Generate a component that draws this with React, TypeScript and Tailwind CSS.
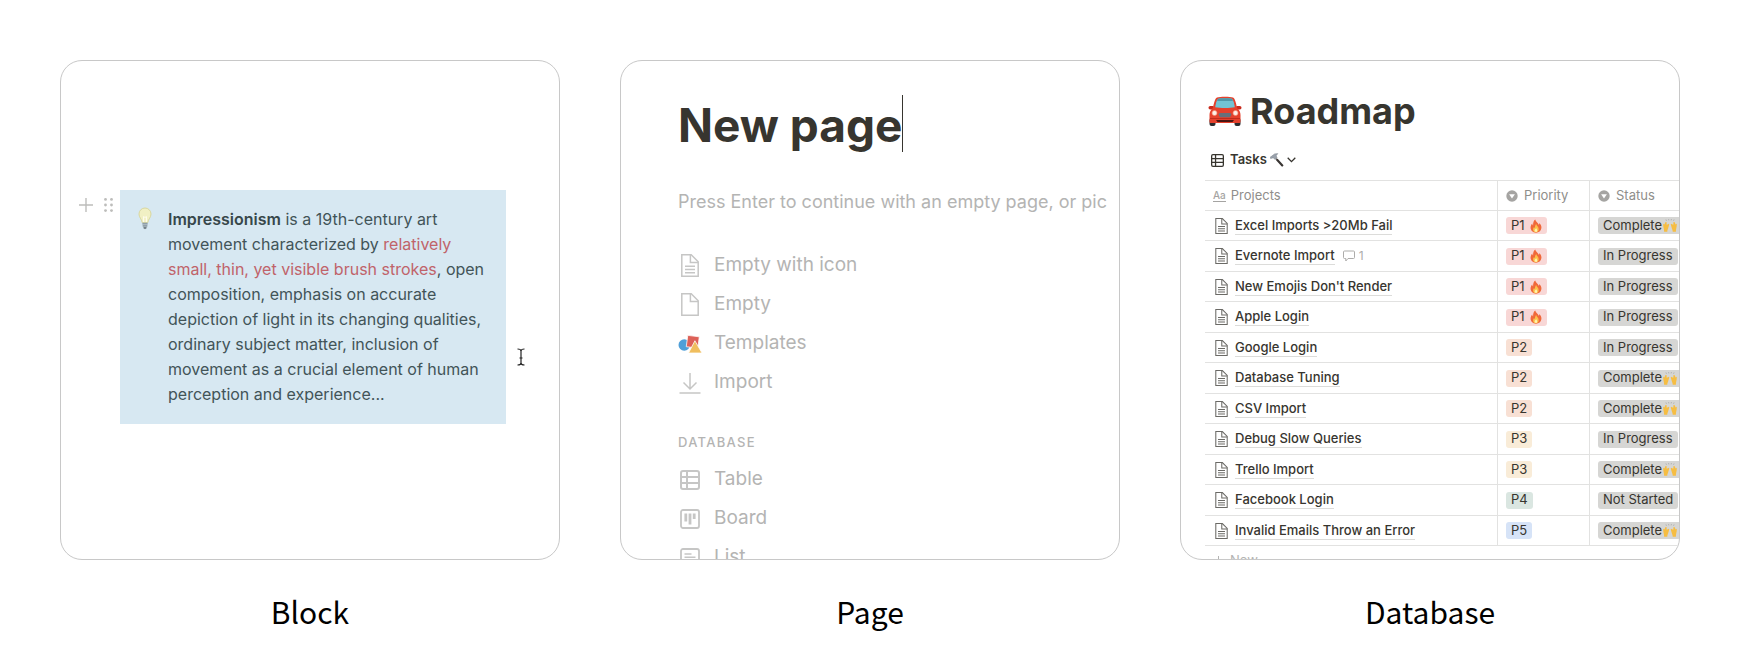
import type { ReactNode } from "react";

type Priority = "P1" | "P2" | "P3" | "P4" | "P5";
type Status = "Complete" | "In Progress" | "Not Started";

interface Task {
  name: string;
  priority: Priority;
  status: Status;
  comments?: number;
}

const tasks: Task[] = [
  { name: "Excel Imports >20Mb Fail", priority: "P1", status: "Complete" },
  { name: "Evernote Import", priority: "P1", status: "In Progress", comments: 1 },
  { name: "New Emojis Don't Render", priority: "P1", status: "In Progress" },
  { name: "Apple Login", priority: "P1", status: "In Progress" },
  { name: "Google Login", priority: "P2", status: "In Progress" },
  { name: "Database Tuning", priority: "P2", status: "Complete" },
  { name: "CSV Import", priority: "P2", status: "Complete" },
  { name: "Debug Slow Queries", priority: "P3", status: "In Progress" },
  { name: "Trello Import", priority: "P3", status: "Complete" },
  { name: "Facebook Login", priority: "P4", status: "Not Started" },
  { name: "Invalid Emails Throw an Error", priority: "P5", status: "Complete" }
];

const priorityColors: Record<Priority, string> = {
  P1: "bg-[#f8d7d6]",
  P2: "bg-[#f8e0d4]",
  P3: "bg-[#f9ecd8]",
  P4: "bg-[#dae6e1]",
  P5: "bg-[#d6e3f7]"
};

function DocIcon({ className, lines = true }: { className: string; lines?: boolean }) {
  return (
    <svg viewBox="0 0 18 23" fill="none" stroke="currentColor" strokeWidth="1.5" className={className} aria-hidden="true">
      <path d="M.8.8h9.4l7 7v14.4H.8z" />
      <path d="M9.4.8v7.8h7.8" />
      {lines && <path d="M4 12.3h10M4 15.5h10M4 18.7h10" />}
    </svg>
  );
}

function TableIcon({ className }: { className: string }) {
  return (
    <svg viewBox="0 0 20 20" fill="none" stroke="currentColor" strokeWidth="2" className={className} aria-hidden="true">
      <rect x="1" y="1" width="18" height="18" rx="2" />
      <path d="M7 1v18M1 7h18M1 13h18" />
    </svg>
  );
}

function BoardIcon() {
  return (
    <svg viewBox="0 0 20 20" fill="none" stroke="currentColor" className="size-5" aria-hidden="true">
      <rect x="1" y="1" width="18" height="18" rx="2" strokeWidth="1.8" />
      <path d="M5.8 4.5v8M10 4.5v11M14.2 4.5v5.5" strokeWidth="2.8" />
    </svg>
  );
}

function ListIcon() {
  return (
    <svg viewBox="0 0 20 20" fill="none" stroke="currentColor" strokeWidth="1.8" className="size-5" aria-hidden="true">
      <rect x="1" y="1" width="18" height="18" rx="2" />
      <path d="M4.5 6h7M4.5 9.3h11M4.5 12.6h9" strokeWidth="1.5" />
    </svg>
  );
}

function TemplatesIcon() {
  return (
    <svg viewBox="0 0 25 20" className="h-5 w-[25px]" aria-hidden="true">
      <circle cx="6.5" cy="11" r="6" fill="#4f9fd8" />
      <path d="M10.2 1l12 1.5-1.6 11.8-12-1.5z" fill="#dd6158" stroke="#fff" strokeWidth=".8" />
      <path d="M17.6 6.6L25 19.4H11z" fill="#f0be5e" stroke="#fff" strokeWidth=".8" />
    </svg>
  );
}

function ImportIcon() {
  return (
    <svg viewBox="0 0 22 22" fill="none" stroke="currentColor" strokeWidth="1.5" className="size-[22px]" aria-hidden="true">
      <path d="M11 1v16M4.5 10.5L11 17l6.5-6.5M.5 21h21" />
    </svg>
  );
}

function BulbIcon() {
  return (
    <svg viewBox="0 0 14 23" className="h-[23px] w-3.5" aria-hidden="true">
      <path d="M7 1a6 6 0 0 0-6 6c0 3.6 2.6 4.8 3.2 8.6h5.6C10.4 11.8 13 10.6 13 7a6 6 0 0 0-6-6z" fill="#f1f0c4" stroke="#d9d79f" />
      <path d="M5.6 15V9.5l1.4 1 1.4-1V15" fill="none" stroke="#fffdf0" />
      <path d="M4.3 15.8h5.4l-.5 4.2H4.8z" fill="#8f9ea8" />
      <path d="M4.5 17.6h5M5 20h4l-1 2H6z" fill="#56646e" stroke="#c9d4da" strokeWidth=".5" />
    </svg>
  );
}

function CarIcon() {
  return (
    <svg viewBox="0 0 34 31" className="h-[31px] w-[34px]" aria-hidden="true">
      <rect x="1.5" y="22" width="6" height="8" rx="2" fill="#2b2b2e" />
      <rect x="26.500" y="22" width="6" height="8" rx="2" fill="#2b2b2e" />
      <rect x="0.500" y="10" width="6" height="3.500" rx="1.700" fill="#c92a1c" />
      <rect x="27.500" y="10" width="6" height="3.500" rx="1.700" fill="#c92a1c" />
      <path d="M9 1.400C12 .5 22 .5 25 1.400c2 .8 3.300 6 4 10.600 2.500 2 3.500 4 3.500 7v6.500c0 1-.7 1.500-1.500 1.500H3c-.8 0-1.500-.5-1.500-1.500V19c0-3 1-5 3.500-7 .7-4.600 2-9.800 4-10.600z" fill="#e5412c" />
      <path d="M10 2.800c3-.6 11-.6 14 0 1.400 1.500 2.400 5.200 2.800 8.400-5 .9-14.600.9-19.600 0 .4-3.200 1.400-6.900 2.800-8.400z" fill="#72c3d3" />
      <path d="M10 2.800c3-.6 11-.6 14 0l1 2.200H9z" fill="#4f98a8" />
      <circle cx="6.500" cy="17" r="2.500" fill="#fdeee6" stroke="#f58b73" strokeWidth=".7" />
      <circle cx="27.500" cy="17" r="2.500" fill="#fdeee6" stroke="#f58b73" strokeWidth=".7" />
      <path d="M11.500 17h11l1 1.600-1.500 2.600H12l-1.500-2.600z" fill="#68707a" />
      <path d="M8 24h18l-1.500 2h-15z" fill="#4a1512" />
      <path d="M2 22.500h30" stroke="#b72718" strokeWidth=".8" />
    </svg>
  );
}

function HammerIcon() {
  return (
    <svg viewBox="0 0 14 14" className="size-3.5" aria-hidden="true">
      <path d="M5.500 5l2 2.200" stroke="#8a7f78" strokeWidth="1.500" />
      <path d="M7.300 7l5 5.400" stroke="#3a3634" strokeWidth="2.200" strokeLinecap="round" />
      <path d="M.6 5.600L.4 3.900l1.400-.8L4.600.900 7.800.600 6.200 2.700l.8 2-1.900 1.900-1.600-1.700-1.200.2z" fill="#9aa2ac" stroke="#7b838d" strokeWidth=".5" />
    </svg>
  );
}

function FireIcon() {
  return (
    <svg viewBox="0 0 12 14" className="h-3.5 w-3" aria-hidden="true">
      <path d="M5.200.5c.5 2.400 3 3.500 3.600 5.300.5-.5.600-1.200.5-1.800C11 5.500 11.600 7.300 11.400 9c-.3 2.800-2.600 4.700-5.400 4.700S.8 11.700.6 9c-.1-1.800.6-3.500 1.700-4.500 0 .9.200 1.500.8 1.900C3 4 3.500 1.700 5.200.5z" fill="#f0683a" />
      <path d="M6.200 5c.2 1.700 2.500 2.600 2.500 5.300 0 2-1.200 3-2.700 3s-2.900-1-2.900-2.900c0-1.200.5-1.900 1-2.500.2.600.4.900.8 1C5 7.500 5.300 6 6.200 5z" fill="#fbc04a" />
      <path d="M6.100 9c.2.900 1.200 1.300 1.200 2.500 0 .9-.6 1.500-1.300 1.500s-1.400-.5-1.400-1.400c0-1.200 1.200-1.500 1.500-2.600z" fill="#fff3b0" />
    </svg>
  );
}

function HandsIcon() {
  return (
    <svg viewBox="0 0 14 13" className="h-[13px] w-3.5 shrink-0" aria-hidden="true">
      <path d="M3 .6l.4 1M5.600.300l.2 1M8.400.300l-.2 1M11 .6l-.4 1" stroke="#9b9b9b" strokeWidth=".8" />
      <path d="M.2 5.200l1-.8.5 1.400.5-2.600 1.300-.1.300 2.900 1.500-1.300 1 .8-1 3.300c-.3 1.400-.9 1.800-1 3.900H1.100C1.200 9.700.1 8.400.2 5.200z" fill="#f6bd42" />
      <path d="M13.800 5.200l-1-.8-.5 1.400-.5-2.600-1.300-.1-.3 2.900-1.500-1.300-1 .8 1 3.300c.3 1.400.9 1.800 1 3.900h3.200c-.1-3 1-4.300.9-7.500z" fill="#f6bd42" />
    </svg>
  );
}

function SelectIcon() {
  return (
    <svg viewBox="0 0 12 12" className="size-3" aria-hidden="true">
      <circle cx="6" cy="6" r="5.7" fill="#a5a4a2" />
      <path d="M3.100 4.200h5.800L6 8.500z" fill="#fff" />
    </svg>
  );
}

function Showcase({ caption, children }: { caption: string; children: ReactNode }) {
  return (
    <figure className="min-w-0">
      <div className="aspect-square overflow-hidden rounded-[22px] border border-[#c8c8c8]">{children}</div>
      <figcaption className="mt-7 text-center font-['Noto_Sans_CJK_SC',sans-serif] text-3xl leading-[46px] text-black">
        {caption}
      </figcaption>
    </figure>
  );
}

function BlockDemo() {
  return (
    <div className="flex items-start pt-[129px]">
      <button type="button" aria-label="Add block" className="mt-2 ml-[18px] text-[#bdbdbb]">
        <svg viewBox="0 0 14 14" stroke="currentColor" strokeWidth="1.4" className="size-3.5" aria-hidden="true">
          <path d="M7 0v14M0 7h14" />
        </svg>
      </button>
      <button type="button" aria-label="Drag block" className="mt-2 mr-[7px] ml-[11px] text-[#bdbdbb]">
        <svg viewBox="0 0 9 14" fill="currentColor" className="h-3.5 w-[9px]" aria-hidden="true">
          <circle cx="1.5" cy="1.4" r="1.4" />
          <circle cx="7.5" cy="1.4" r="1.4" />
          <circle cx="1.5" cy="7" r="1.4" />
          <circle cx="7.5" cy="7" r="1.4" />
          <circle cx="1.5" cy="12.6" r="1.4" />
          <circle cx="7.5" cy="12.6" r="1.4" />
        </svg>
      </button>
      <div className="flex min-w-0 flex-1 items-start gap-4 bg-[#d7e8f2] pt-[17px] pr-5 pb-[17px] pl-[18px]">
        <BulbIcon />
        <p className="min-w-0 flex-1 text-base leading-[25px] text-[#425458]">
          <strong className="font-semibold text-[#37474b]">Impressionism</strong> is a 19th-century art movement
          characterized by <span className="text-[#c0636a]">relatively small, thin, yet visible brush strokes</span>,
          open composition, emphasis on accurate depiction of light in its changing qualities, ordinary subject matter,
          inclusion of movement as a crucial element of human perception and experience...
        </p>
      </div>
      <svg
        viewBox="0 0 8 18"
        fill="none"
        stroke="#222"
        strokeWidth="1.2"
        className="mt-[158px] mr-[34px] ml-[11px] h-[18px] w-2"
        aria-hidden="true"
      >
        <path d="M.5 1C2.500 1 4 1.500 4 3v12c0 1.500-1.500 2-3.500 2M7.500 1C5.500 1 4 1.500 4 3M4 15c0 1.500 1.500 2 3.500 2M2.500 10h3" />
      </svg>
    </div>
  );
}

function MenuItem({ icon, label }: { icon: ReactNode; label: string }) {
  return (
    <li>
      <button type="button" className="flex h-[39px] w-full items-center text-left">
        <span className="mr-3 flex w-6 justify-center text-[#c6c6c5]">{icon}</span>
        {label}
      </button>
    </li>
  );
}

function PageDemo() {
  return (
    <div className="pt-[34px] pl-[57px] text-[19px] text-[#b4b4b3]">
      <div className="flex items-center">
        <h1 className="pt-1 text-[46px] leading-[53px] font-bold text-[#37352f]">New page</h1>
        <span className="h-[57px] w-px bg-[#37352f]" />
      </div>
      <p className="mt-9 text-lg leading-7 whitespace-nowrap">Press Enter to continue with an empty page, or pic</p>
      <ul className="mt-[30px]">
        <MenuItem icon={<DocIcon className="h-[23px] w-[18px]" />} label="Empty with icon" />
        <MenuItem icon={<DocIcon className="h-[23px] w-[18px]" lines={false} />} label="Empty" />
        <MenuItem icon={<TemplatesIcon />} label="Templates" />
        <MenuItem icon={<ImportIcon />} label="Import" />
      </ul>
      <h2 className="mt-[30px] text-[13px] leading-5 font-medium tracking-widest">DATABASE</h2>
      <ul className="mt-2">
        <MenuItem icon={<TableIcon className="size-5" />} label="Table" />
        <MenuItem icon={<BoardIcon />} label="Board" />
        <MenuItem icon={<ListIcon />} label="List" />
      </ul>
    </div>
  );
}

function TaskRow({ task }: { task: Task }) {
  return (
    <tr className="h-[30px] even:h-[31px]">
      <td className="border-b border-[#e2e2e1] pl-2.5">
        <div className="flex items-center">
          <DocIcon className="mr-[7px] h-4 w-[13px] text-[#6a6965]" />
          <a href="#" className="border-b border-[#dcdcda] leading-[17px] font-medium">
            {task.name}
          </a>
          {task.comments && (
            <span className="ml-2 flex items-center gap-1 text-xs text-[#adacaa]">
              <svg viewBox="0 0 12 12" fill="none" stroke="currentColor" className="size-3" aria-hidden="true">
                <path d="M1.500 1h9q1 0 1 1v5.500q0 1-1 1H5L2.800 11V8.500H1.500q-1 0-1-1V2q0-1 1-1z" />
              </svg>
              {task.comments}
            </span>
          )}
        </div>
      </td>
      <td className="border-b border-l border-[#e2e2e1] pl-2">
        <span className={`flex h-[17px] w-fit items-center gap-[5px] rounded-[3px] px-[5px] ${priorityColors[task.priority]}`}>
          {task.priority}
          {task.priority === "P1" && <FireIcon />}
        </span>
      </td>
      <td className="border-b border-l border-[#e2e2e1] pl-2">
        <span className="flex h-[17px] w-fit items-center gap-px rounded-[3px] bg-[#d6d6d4] px-[5px]">
          {task.status}
          {task.status === "Complete" && <HandsIcon />}
        </span>
      </td>
    </tr>
  );
}

function DatabaseDemo() {
  return (
    <div className="pt-[29px] pl-6 text-[13px] whitespace-nowrap text-[#37352f]">
      <h1 className="flex items-center gap-2 pl-[3px] text-4xl leading-[42px] font-bold">
        <CarIcon />
        Roadmap
      </h1>
      <button type="button" className="mt-[18px] flex h-5 items-center pl-1.5 font-semibold">
        <TableIcon className="mr-1.5 size-[13px]" />
        Tasks
        <span className="mx-[3px]">
          <HammerIcon />
        </span>
        <svg viewBox="0 0 9 6" fill="none" stroke="currentColor" strokeWidth="1.3" className="h-1.5 w-[9px]" aria-hidden="true">
          <path d="M.7.8l3.800 3.800L8.300.8" />
        </svg>
      </button>
      <table className="mt-2.5 w-[580px] table-fixed border-separate border-spacing-0 border-t border-[#e2e2e1] text-left">
        <colgroup>
          <col className="w-[292px]" />
          <col className="w-[92px]" />
          <col />
        </colgroup>
        <thead className="text-[#8f8e8b]">
          <tr className="h-[30px]">
            <th className="border-b border-[#e2e2e1] pl-2 font-normal">
              <span className="flex items-center gap-[5px]">
                <span className="border-b border-[#a5a4a2] text-[10px] leading-[11px] font-medium text-[#a5a4a2]">Aa</span>
                Projects
              </span>
            </th>
            <th className="border-b border-l border-[#e2e2e1] pl-2 font-normal">
              <span className="flex items-center gap-1.5">
                <SelectIcon />
                Priority
              </span>
            </th>
            <th className="border-b border-l border-[#e2e2e1] pl-2 font-normal">
              <span className="flex items-center gap-1.5">
                <SelectIcon />
                Status
              </span>
            </th>
          </tr>
        </thead>
        <tbody>
          {tasks.map((task) => (
            <TaskRow key={task.name} task={task} />
          ))}
        </tbody>
      </table>
      <button type="button" className="flex h-[30px] items-center gap-1.5 pl-2 text-[#b4b4b3]">
        <svg viewBox="0 0 11 11" stroke="currentColor" className="size-[11px]" aria-hidden="true">
          <path d="M5.500 0v11M0 5.500h11" />
        </svg>
        New
      </button>
    </div>
  );
}

export default function App() {
  return (
    <main className="grid grid-cols-3 gap-[60px] bg-white px-[60px] pt-[60px] pb-6 font-[Inter,sans-serif]">
      <Showcase caption="Block">
        <BlockDemo />
      </Showcase>
      <Showcase caption="Page">
        <PageDemo />
      </Showcase>
      <Showcase caption="Database">
        <DatabaseDemo />
      </Showcase>
    </main>
  );
}
